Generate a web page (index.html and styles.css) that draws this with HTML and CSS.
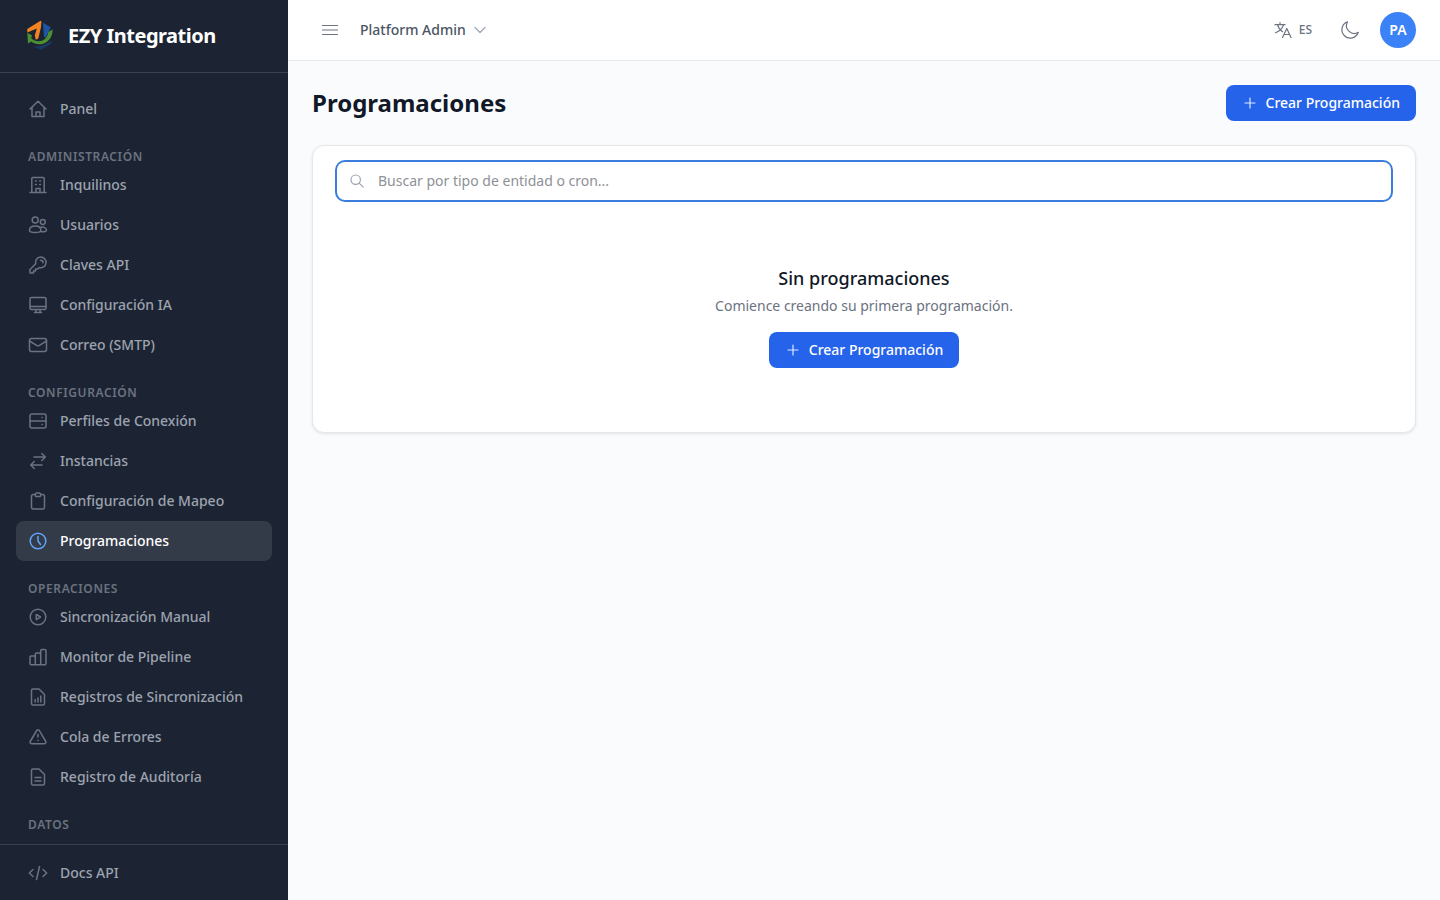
FILE: index.html
```html
<!DOCTYPE html>
<html lang="es">
<head>
  <meta charset="UTF-8">
  <title>Programaciones - EZY Integration</title>
  <meta name="viewport" content="width=device-width, initial-scale=1.0">
  <link rel="stylesheet" href="styles.css">
</head>
<body>

<!-- Sidebar -->
<aside class="sidebar">
  <div class="brand">
    <svg class="logo" viewBox="0 0 32 32" aria-hidden="true">
      <path fill="#1b3a63" d="M7 25.500c4 1.500 12 2 20.500-5v3L16.700 29.800z"/>
      <path fill="#1c56a5" d="M19 2.700l7.700 4.600-2.500 5-2.200 5.500-2-1z"/>
      <path fill="#f58220" d="M3.300 12.500V9L16.500.8l1 .8-.6 6-2.600 11-2.500 1.200-1-4.300 2-7z"/>
      <path fill="#4b9132" d="M3.300 12.700l4.800 2.800-1 2.500c3 3 7.500 4.200 11.500 2.500 3.400-1.500 5.500-5 5.700-8.500l4.200-2.500c.4 6.500-3.200 12.300-9.300 14.200-4.500 1.300-8.500.4-12-2.200l-3.200 2z"/>
    </svg>
    <span class="brand-name">EZY Integration</span>
  </div>

  <nav class="nav">
    <a class="nav-item" href="#panel">
      <svg class="icon" viewBox="0 0 20 20"><path d="M2 10l8-7.700 8 7.700M4 8.500V17.500h12V8.500M8 17.500v-4.500h4v4.500"/></svg>
      Panel
    </a>

    <h2 class="nav-title">Administración</h2>
    <a class="nav-item" href="#inquilinos">
      <svg class="icon" viewBox="0 0 20 20"><path d="M2 17.500h16M3.800 17.500V3.500a1 1 0 0 1 1-1h10.400a1 1 0 0 1 1 1v14M8 17.500v-4h4v4M7.500 6h.8M11.700 6h.8M7.500 9.500h.8M11.700 9.500h.8"/></svg>
      Inquilinos
    </a>
    <a class="nav-item" href="#usuarios">
      <svg class="icon" viewBox="0 0 20 20"><circle cx="7.200" cy="5" r="3"/><circle cx="14.800" cy="7" r="2.400"/><path d="M1.500 15.500c0-3 2.500-4.500 5.700-4.500s5.700 1.500 5.700 4.500c0 1.200-2.500 2-5.700 2s-5.700-.8-5.700-2zM12 12.500c3-1.500 6.500.200 6.500 2.800 0 1-2 1.600-5.200 1.400"/></svg>
      Usuarios
    </a>
    <a class="nav-item" href="#claves">
      <svg class="icon" viewBox="0 0 20 20"><path d="M12.500 2a5.400 5.400 0 1 1-1.300 10.600L9.500 14H7.500v2H5.500v2h-3.500v-3.500l5.700-5.700A5.400 5.400 0 0 1 12.500 2zM12.500 5.200a2.500 2.500 0 0 1 2.500 2.500"/></svg>
      Claves API
    </a>
    <a class="nav-item" href="#configuracion-ia">
      <svg class="icon" viewBox="0 0 20 20"><rect x="2" y="2.500" width="16" height="12" rx="1.500"/><path d="M2 11.500h16M8.300 14.500l-.8 3M11.700 14.500l.8 3M6.500 17.500h7"/></svg>
      Configuración IA
    </a>
    <a class="nav-item" href="#correo">
      <svg class="icon" viewBox="0 0 20 20"><rect x="1.500" y="3.500" width="17" height="13" rx="2"/><path d="M1.500 6l7.500 4.700q1 .6 2 0L18.500 6"/></svg>
      Correo (SMTP)
    </a>

    <h2 class="nav-title">Configuración</h2>
    <a class="nav-item" href="#perfiles">
      <svg class="icon" viewBox="0 0 20 20"><rect x="2" y="3" width="16" height="14" rx="2"/><path d="M2 10h16M14 6.500h.2M14 13.500h.2"/></svg>
      Perfiles de Conexión
    </a>
    <a class="nav-item" href="#instancias">
      <svg class="icon" viewBox="0 0 20 20"><path d="M6 6h11M13.800 2.500L17.300 6l-3.500 3.500M14 14H3M6.200 10.500L2.700 14l3.500 3.500"/></svg>
      Instancias
    </a>
    <a class="nav-item" href="#mapeo">
      <svg class="icon" viewBox="0 0 20 20"><path d="M7 3.500H5.200a1.700 1.700 0 0 0-1.700 1.700v11.100A1.700 1.700 0 0 0 5.200 18h9.600a1.700 1.700 0 0 0 1.700-1.700V5.200a1.700 1.700 0 0 0-1.700-1.700H13"/><path d="M8.300 2h3.400L13 3.800l-.7 1.700H7.700L7 3.800z"/></svg>
      Configuración de Mapeo
    </a>
    <a class="nav-item active" href="#programaciones" aria-current="page">
      <svg class="icon" viewBox="0 0 20 20"><circle cx="10" cy="10" r="7.800"/><path d="M10 5.500V10l2.500 3.500"/></svg>
      Programaciones
    </a>

    <h2 class="nav-title">Operaciones</h2>
    <a class="nav-item" href="#sincronizacion">
      <svg class="icon" viewBox="0 0 20 20"><circle cx="10" cy="10" r="7.800"/><path d="M8.300 7.400l4.200 2.600-4.200 2.600z"/></svg>
      Sincronización Manual
    </a>
    <a class="nav-item" href="#monitor">
      <svg class="icon" viewBox="0 0 20 20"><path d="M7.300 17.800H3.200a1.200 1.200 0 0 1-1.200-1.200V10.200A1.200 1.200 0 0 1 3.200 9h2.900a1.200 1.200 0 0 1 1.200 1.200zM12.700 17.800H7.300V7.200A1.200 1.200 0 0 1 8.500 6h3a1.200 1.200 0 0 1 1.200 1.200zM12.700 17.800V3.700a1.200 1.200 0 0 1 1.200-1.200h2.900A1.200 1.200 0 0 1 18 3.700v12.900a1.200 1.200 0 0 1-1.200 1.200z"/></svg>
      Monitor de Pipeline
    </a>
    <a class="nav-item" href="#registros">
      <svg class="icon" viewBox="0 0 20 20"><path d="M11 2H5a1.500 1.500 0 0 0-1.500 1.500v13A1.500 1.500 0 0 0 5 18h10a1.500 1.500 0 0 0 1.500-1.500V7.500zM7.200 12.500v2.500M10 11v4M12.800 9v6"/></svg>
      Registros de Sincronización
    </a>
    <a class="nav-item" href="#errores">
      <svg class="icon" viewBox="0 0 20 20"><path d="M8.700 3.500a1.500 1.500 0 0 1 2.600 0l6.500 11a1.500 1.500 0 0 1-1.300 2.200h-13a1.500 1.500 0 0 1-1.300-2.200zM10 7.500v2.500M10 13.300v.2"/></svg>
      Cola de Errores
    </a>
    <a class="nav-item" href="#auditoria">
      <svg class="icon" viewBox="0 0 20 20"><path d="M11 2H5a1.500 1.500 0 0 0-1.500 1.500v13A1.500 1.500 0 0 0 5 18h10a1.500 1.500 0 0 0 1.500-1.500V7.500zM7 10.500h6M7 14h6"/></svg>
      Registro de Auditoría
    </a>

    <h2 class="nav-title">Datos</h2>
  </nav>

  <div class="sidebar-footer">
    <a class="nav-item" href="#docs">
      <svg class="icon" viewBox="0 0 20 20"><path d="M5 6.500L1.300 10 5 13.500M15 6.500l3.700 3.500-3.700 3.500M11.500 3.500l-3 13"/></svg>
      Docs API
    </a>
  </div>
</aside>

<div class="page">
  <!-- Top bar -->
  <header class="topbar">
    <button class="icon-button" type="button" aria-label="Menú">
      <svg class="icon" viewBox="0 0 20 20"><path d="M2.500 5.500h15M2.500 10h15M2.500 14.500h15"/></svg>
    </button>
    <button class="tenant" type="button">
      Platform Admin
      <svg class="icon-small" viewBox="0 0 16 16"><path d="M3 5.500l5 5 5-5"/></svg>
    </button>
    <div class="topbar-right">
      <button class="language" type="button">
        <svg class="icon" viewBox="0 0 20 20"><path d="M2 4.700h10M7 2.700v2M10.500 4.700c-1 4-4 6.500-8 8M4.500 4.700c.8 3 2.500 5.500 5 7M9.500 17.500l4.300-9 4.200 9M11 14.500h5.600"/></svg>
        ES
      </button>
      <button class="icon-button" type="button" aria-label="Modo oscuro">
        <svg class="icon" viewBox="0 0 20 20"><path d="M7.500 1.800a7.800 7.800 0 0 0 10.800 10.500A8.400 8.400 0 1 1 7.500 1.800z"/></svg>
      </button>
      <button class="avatar" type="button">PA</button>
    </div>
  </header>

  <main class="content">
    <div class="page-head">
      <h1>Programaciones</h1>
      <button class="button" type="button">
        <svg class="icon-small" viewBox="0 0 16 16"><path d="M8 3v10M3 8h10"/></svg>
        Crear Programación
      </button>
    </div>

    <section class="card">
      <label class="search">
        <svg class="icon-small" viewBox="0 0 16 16"><circle cx="6.700" cy="6.700" r="4.700"/><path d="M10.200 10.200l4 4"/></svg>
        <input type="text" placeholder="Buscar por tipo de entidad o cron..." aria-label="Buscar">
      </label>
      <div class="empty">
        <h3>Sin programaciones</h3>
        <p>Comience creando su primera programación.</p>
        <button class="button" type="button">
          <svg class="icon-small" viewBox="0 0 16 16"><path d="M8 3v10M3 8h10"/></svg>
          Crear Programación
        </button>
      </div>
    </section>
  </main>
</div>

</body>
</html>
```
FILE: styles.css
```css
/* Global styles */
* {
  box-sizing: border-box;
}

body {
  display: flex;
  height: 100vh;
  margin: 0;
  font-family: "Noto Sans", sans-serif;
  font-size: 14px;
  line-height: 20px;
  color: #111827;
  background: #fafbfd;
}

h1, h2, h3, p {
  margin: 0;
}

button {
  display: flex;
  align-items: center;
  padding: 0;
  border: none;
  background: none;
  font: inherit;
  cursor: pointer;
}

svg {
  flex-shrink: 0;
  fill: none;
}

.icon,
.icon-small {
  width: 20px;
  height: 20px;
  stroke: currentColor;
  stroke-width: 1.2;
  stroke-linecap: round;
  stroke-linejoin: round;
}

.icon-small {
  width: 16px;
  height: 16px;
}

/* Sidebar */
.sidebar {
  display: flex;
  flex-direction: column;
  flex-shrink: 0;
  width: 288px;
  background: #1c2433;
}

.brand {
  display: flex;
  align-items: center;
  gap: 12px;
  padding: 20px 24px;
  border-bottom: 1px solid #374151;
}

.logo {
  width: 32px;
  height: 32px;
}

.brand-name {
  font-size: 20px;
  font-weight: 700;
  line-height: 28px;
  letter-spacing: -0.5px;
  color: #fff;
}

.nav {
  flex: 1;
  min-height: 0;
  padding: 16px;
  overflow: hidden;
}

.nav-title {
  margin-top: 20px;
  padding: 0 12px;
  font-size: 12px;
  font-weight: 600;
  line-height: 16px;
  letter-spacing: 0.6px;
  text-transform: uppercase;
  color: #6b7280;
}

.nav-item {
  display: flex;
  align-items: center;
  gap: 12px;
  height: 40px;
  padding: 0 12px;
  border-radius: 8px;
  font-weight: 500;
  text-decoration: none;
  color: #9ca3af;
}

.nav-item .icon {
  stroke-width: 1.5;
  color: #6b7280;
}

.nav-item:hover,
.nav-item.active {
  color: #fff;
  background: #333a48;
}

.nav-item.active .icon {
  color: #60a5fa;
}

.sidebar-footer {
  padding: 8px 16px 7px;
  border-top: 1px solid #374151;
}

/* Top bar */
.page {
  flex: 1;
  min-width: 0;
}

.topbar {
  display: flex;
  align-items: center;
  gap: 12px;
  padding: 12px 24px;
  background: #fff;
  border-bottom: 1px solid #e5e7eb;
}

.icon-button {
  justify-content: center;
  width: 36px;
  height: 36px;
  color: #6b7280;
}

.tenant {
  gap: 6px;
  font-weight: 500;
  color: #4b5563;
}

.tenant .icon-small {
  color: #9ca3af;
}

.topbar-right {
  display: flex;
  align-items: center;
  gap: 12px;
  margin-left: auto;
}

.language {
  gap: 6px;
  padding: 0 8px;
  font-size: 12px;
  font-weight: 500;
  color: #6b7280;
}

.avatar {
  justify-content: center;
  width: 36px;
  height: 36px;
  border-radius: 50%;
  font-weight: 600;
  color: #fff;
  background: #3b82f6;
}

/* Content */
.content {
  padding: 24px;
}

.page-head {
  display: flex;
  align-items: center;
  justify-content: space-between;
  margin-bottom: 24px;
}

h1 {
  font-size: 24px;
  font-weight: 700;
  line-height: 32px;
}

.button {
  gap: 8px;
  height: 36px;
  padding: 0 16px;
  border-radius: 8px;
  font-weight: 500;
  color: #fff;
  background: #2563eb;
}

.button .icon-small {
  color: #dbeafe;
}

.card {
  padding: 16px 24px 0;
  background: #fff;
  border: 1px solid #e5e7eb;
  border-radius: 12px;
  box-shadow: 0 1px 3px rgba(0, 0, 0, 0.1);
}

.search {
  display: flex;
  align-items: center;
  gap: 13px;
  height: 38px;
  padding: 0 12px;
  border-radius: 8px;
  box-shadow: 0 0 0 2px #3b7ddd;
  color: #9ca3af;
}

.search input {
  flex: 1;
  padding: 0;
  border: none;
  outline: none;
  font: inherit;
  color: #111827;
  background: none;
}

.search input::placeholder {
  color: #8e9196;
}

.empty {
  display: flex;
  flex-direction: column;
  align-items: center;
  padding: 64px 0;
}

.empty h3 {
  margin-bottom: 4px;
  font-size: 18px;
  font-weight: 500;
  line-height: 28px;
}

.empty p {
  margin-bottom: 16px;
  color: #6b7280;
}
```
